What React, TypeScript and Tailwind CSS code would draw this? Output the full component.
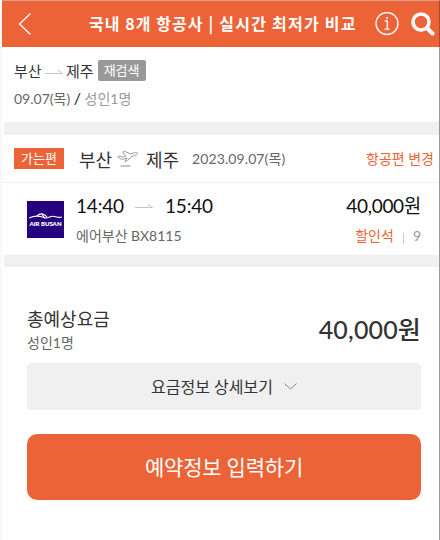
import { ReactNode } from 'react'

const HalfArrow = ({ className }: { className?: string }) => (
    <svg className={className} width="18" height="5" viewBox="0 0 18 5" fill="none" stroke="currentColor">
        <path d="M0 4.5h17.500L12.500 1" />
    </svg>
)

const PlaneIcon = () => (
    <svg width="22" height="18" viewBox="0 0 22 18" fill="none" stroke="#8c8c8c" strokeWidth="0.9" strokeLinejoin="round" strokeLinecap="round">
        <path d="M1 6.500l1.700-.700 2.500 1.500 3.800-1.600L5.600 2.200l2-.9 6.200 2.700 3.600-1.300c1.400-.5 2.900-.4 3.100.4.2.9-.7 1.600-2 2.100l-4 1.500-4.700 4.200-1.900.7 2.100-3.700-3.400 1.200c-1.300.4-2.600.4-3.500-.500z" />
        <path d="M4 16h9" strokeWidth="1.200" />
    </svg>
)

const AirBusanLogo = () => (
    <div className="flex h-[37px] w-[37px] shrink-0 flex-col items-center bg-[#25007f] pt-3">
        <svg width="33" height="7" viewBox="0 0 33 7" fill="none" stroke="#fff" strokeWidth="1.100">
            <path d="M0 5c4-2 7-2.400 11-1.600 3 .6 4 1.600 6 1.600 3 0 4-1.800 7-1.800s4 2 9 .8" />
            <path d="M8 2.800c2-2 5-2.600 8-.6l2 1.800M13 1.500l3 4" />
        </svg>
        <span className="text-[6px] leading-[7px] font-extrabold text-white">AIR BUSAN</span>
    </div>
)

const Band = ({ className }: { className: string }) => (
    <div className={`ml-0.5 bg-[#f0f0f0] ${className}`} />
)

const Orange = ({ children }: { children: ReactNode }) => (
    <span className="text-[#ec6337]">{children}</span>
)

const App = () => {
    return (
        <div className="flex h-[540px] w-[440px] flex-col border-r border-l-2 border-r-[#999] border-l-[#f8f8f8] bg-white font-['Lato','Noto_Sans_CJK_KR',sans-serif] whitespace-nowrap text-[#333]">
            <header className="-mr-px flex h-[47px] shrink-0 items-center border-t border-r border-t-[#d99c85] border-r-[#a84a2b] bg-[#ec6337] text-white">
                <svg className="ml-4 shrink-0" width="14" height="24" viewBox="0 0 14 24" fill="none" stroke="#fff" strokeWidth="1.300">
                    <path d="M12.500 1.500L1.500 12l11 10.500" />
                </svg>
                <h1 className="ml-[57px] flex w-[270px] shrink-0 items-center pb-0.5 font-['Noto_Sans_CJK_KR',sans-serif] text-[16px] leading-none font-bold">
                    <span className="tracking-[1.050px]">국내 8개 항공사</span>
                    <span className="mr-[3px] ml-[5px]">|</span>
                    <span className="ml-[3px] tracking-[1.250px]">실시간 최저가 비교</span>
                </h1>
                <svg className="ml-4 shrink-0" width="24" height="24" viewBox="0 0 24 24" fill="none" stroke="#fff" strokeWidth="1.300">
                    <circle cx="12" cy="11.500" r="11" />
                    <path d="M9.800 9h2.500v8M9.500 17.100h5" />
                    <circle cx="12" cy="6" r="1" fill="#fff" stroke="none" />
                </svg>
                <svg className="ml-3 shrink-0" width="24" height="24" viewBox="0 0 24 24" fill="none" stroke="#fff">
                    <circle cx="10" cy="10" r="8" strokeWidth="3.600" />
                    <path d="M16 16l5.500 5.500" strokeWidth="4" strokeLinecap="round" />
                </svg>
            </header>

            <section className="h-[75px] shrink-0 pt-[13px] pl-3">
                <div className="flex h-[21px] items-center">
                    <span className="w-[31px] pt-px text-[15px] leading-none">부산</span>
                    <HalfArrow className="mt-px text-[#c4c4c4]" />
                    <span className="ml-[3px] pt-px text-[15px] leading-none">제주</span>
                    <button className="ml-1 h-[21px] w-12 rounded-[2px] bg-[#999] text-[13px] leading-none text-white">재검색</button>
                </div>
                <p className="mt-[7px] text-[14px] leading-5 text-[#666]">09.07(목) <span className="text-[16px] text-[#222]">/</span> <span className="text-[#999]">성인1명</span></p>
            </section>

            <Band className="h-[13px] shrink-0" />

            <section className="flex h-12 shrink-0 items-center border-b border-[#f0f0f0] pl-3">
                <span className="flex h-[21px] w-[50px] items-center justify-center bg-[#ec6337] text-[13px] leading-none text-white">가는편</span>
                <span className="ml-[15px] w-[38px] pt-0.5 text-[18px] leading-none">부산</span>
                <PlaneIcon />
                <span className="ml-[7px] w-[46px] pt-0.5 text-[18px] leading-none">제주</span>
                <span className="text-[14px] leading-none tracking-[0.100px] text-[#666]">2023.09.07(목)</span>
                <span className="mr-[5px] ml-auto text-[14px] leading-none"><Orange>항공편 변경</Orange></span>
            </section>

            <section className="flex h-[72px] shrink-0 pt-[18px] pr-[18px] pl-[25px]">
                <AirBusanLogo />
                <div className="-mt-[9px] ml-3 grow">
                    <div className="flex h-[26px] items-center text-[19px] leading-none tracking-[-0.200px] text-[#111]">
                        <span className="w-[59px]">14:40</span>
                        <HalfArrow className="text-[#c4c4c4]" />
                        <span className="ml-3">15:40</span>
                        <span className="ml-auto tracking-[-0.300px]">40,000원</span>
                    </div>
                    <div className="mt-2 flex h-5 items-center text-[14px] leading-none text-[#666]">
                        <span>에어부산 BX8115</span>
                        <span className="ml-auto"><Orange>할인석</Orange></span>
                        <span className="mx-[9px] mt-1 h-[11px] w-px bg-[#ccc]" />
                        <span className="text-[#999]">9</span>
                    </div>
                </div>
            </section>

            <Band className="h-3 shrink-0" />

            <section className="pr-[18px] pl-[25px]">
                <div className="flex h-24 items-center justify-between">
                    <div className="pt-8">
                        <p className="text-[18px] leading-6">총예상요금</p>
                        <p className="text-[14px] leading-6 text-[#666]">성인1명</p>
                    </div>
                    <strong className="pt-7 text-[25px] leading-none font-medium tracking-[0.150px]">40,000원</strong>
                </div>
                <button className="flex h-[47px] w-full items-center justify-center gap-[11px] rounded-[4px] bg-[#f0f0f0] text-[16px]">
                    요금정보 상세보기
                    <svg width="13" height="7" viewBox="0 0 13 7" fill="none" stroke="#888"><path d="M.5.5l6 5.500 6-5.500" /></svg>
                </button>
                <button className="mt-6 h-[66px] w-full rounded-[10px] bg-[#ec6337] text-[21px] tracking-[-0.200px] text-white">예약정보 입력하기</button>
            </section>
        </div>
    )
}

export default App
